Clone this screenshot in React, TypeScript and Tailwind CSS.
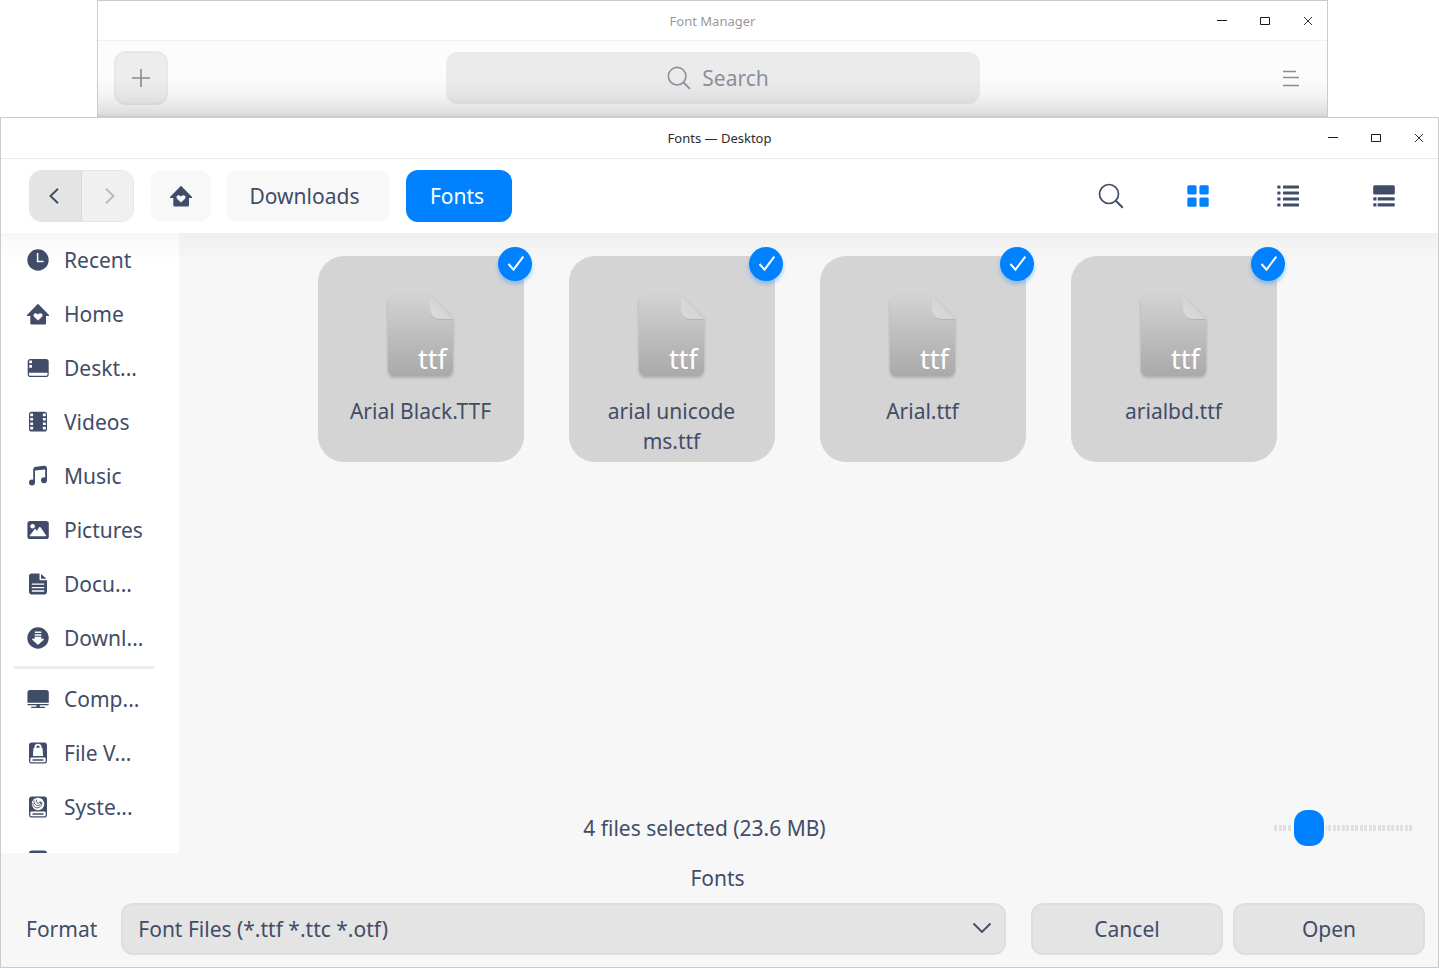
import React from "react";

type IconProps = { className?: string };

const HomeIcon = ({ className = "size-[22px]" }: IconProps) => (
  <svg viewBox="0 0 22 22" className={className} fill="currentColor" aria-hidden="true">
    <path
      fillRule="evenodd"
      d="M11 .8 22 12.100c.2.500 0 .9-.5.9H19v7.200c0 .8-.5 1.300-1.300 1.300H4.600c-.8 0-1.300-.5-1.300-1.300V13H.5c-.5 0-.7-.4-.5-.9L11 .8Zm0 16.600 3.500-3.200c1.300-1.300 1.200-2.700.4-3.400-1-.9-2.500-.8-3.900.7-1.400-1.500-2.900-1.600-3.900-.7-.8.700-.9 2.100.4 3.400l3.500 3.200Z"
    />
  </svg>
);

const RecentIcon = () => (
  <svg viewBox="0 0 22 22" className="size-[22px]" aria-hidden="true">
    <circle cx="11" cy="11" r="10.700" fill="currentColor" />
    <path d="M10.600 4v8.400h6" fill="none" stroke="#fff" strokeWidth="1.500" />
  </svg>
);

const DesktopIcon = () => (
  <svg viewBox="0 0 22 22" className="size-[22px]" aria-hidden="true">
    <rect x=".7" y="2" width="21" height="18" rx="2.800" fill="currentColor" />
    <path d="M1.900 15.800h18.600v1.400c0 1-.6 1.600-1.600 1.600H3.500c-1 0-1.600-.6-1.600-1.600v-1.400Z" fill="#fff" />
    <rect x="2.200" y="3.500" width="2.800" height="2.800" rx=".5" fill="#fff" />
    <rect x="2.200" y="8" width="2.800" height="2.800" rx=".5" fill="#fff" />
  </svg>
);

const VideosIcon = () => (
  <svg viewBox="0 0 22 22" className="size-[22px]" aria-hidden="true">
    <rect x="2" y=".8" width="18" height="19.800" rx="2.600" fill="currentColor" />
    {[2.6, 7, 11.4, 15.8].map((y) => (
      <g key={y} fill="#fff">
        <rect x="3.200" y={y} width="2.900" height="2.600" rx=".5" />
        <rect x="15.900" y={y} width="2.900" height="2.600" rx=".5" />
      </g>
    ))}
  </svg>
);

const MusicIcon = () => (
  <svg viewBox="0 0 22 22" className="size-[22px]" fill="currentColor" aria-hidden="true">
    <path d="M6.200 17.800V4.600c0-1.600 1-2.700 2.700-2.900l8.100-1c1.900-.2 3 .8 3 2.600v12h-1.800V4.400L8 5.600v12.200H6.200Z" />
    <circle cx="5" cy="17.600" r="3" />
    <circle cx="17" cy="15.300" r="3" />
  </svg>
);

const PicturesIcon = () => (
  <svg viewBox="0 0 22 22" className="size-[22px]" aria-hidden="true">
    <rect x=".4" y="2" width="21.400" height="18" rx="2.600" fill="currentColor" />
    <circle cx="5.600" cy="7.200" r="2.300" fill="#fff" />
    <path
      d="M3.200 17.200c-.5 0-.7-.3-.4-.8l4.600-5.900c.5-.6 1.100-.6 1.500 0l1 1.400 2-3.400c.5-.8 1.300-.8 1.800 0l5.300 7.800c.3.500.1.900-.4.900H3.200Z"
      fill="#fff"
    />
  </svg>
);

const DocumentsIcon = () => (
  <svg viewBox="0 0 22 22" className="size-[22px]" aria-hidden="true">
    <path
      d="M4.500.6h8v5.200c0 1 .5 1.500 1.500 1.500h6v11.500c0 1.600-1 2.600-2.600 2.600H4.600C3 21.400 2 20.400 2 18.800V3.200C2 1.600 3 .6 4.500.6Z"
      fill="currentColor"
    />
    <path d="M14 1v4c0 .5.300.8.800.8h4.700L14 1Z" fill="currentColor" />
    <path d="M4.800 11.200h12.400M4.800 14.600h12.400M4.800 18h12.400" stroke="#fff" strokeWidth="1.300" />
  </svg>
);

const DownloadsIcon = () => (
  <svg viewBox="0 0 22 22" className="size-[22px]" aria-hidden="true">
    <circle cx="11" cy="11" r="10.700" fill="currentColor" />
    <path d="M7.700 5.200h6.600M7.700 7.900h6.600" stroke="#fff" strokeWidth="1.500" />
    <path
      d="M7.700 9.700h6.600v2.100h2c.6 0 .8.500.4.900l-4.900 4.600c-.5.500-1.100.500-1.600 0l-4.900-4.600c-.4-.4-.2-.9.400-.9h2V9.700Z"
      fill="#fff"
    />
  </svg>
);

const ComputerIcon = () => (
  <svg viewBox="0 0 22 22" className="size-[22px]" fill="currentColor" aria-hidden="true">
    <path d="M2.800 2h16.600c1.500 0 2.400.9 2.400 2.400v10.400H.4V4.400C.4 2.900 1.300 2 2.800 2Z" />
    <path d="M.4 16h21.400c0 .9-.6 1.300-1.500 1.300H12.800v1.500h4.700c.8 0 .8 1.300 0 1.300h-13c-.8 0-.8-1.300 0-1.300h4.900v-1.500H1.900C1 17.300.4 16.900.4 16Z" />
  </svg>
);

const DriveBase = ({ children }: { children?: React.ReactNode }) => (
  <svg viewBox="0 0 22 22" className="size-[22px]" aria-hidden="true">
    <rect x="2" y=".5" width="18" height="21" rx="2.800" fill="currentColor" />
    <rect x="3.300" y="15.600" width="15.400" height="4.700" rx="1.400" fill="#fff" />
    <path d="M5.500 18h11" stroke="currentColor" strokeWidth="1.500" />
    {children}
  </svg>
);

const VaultIcon = () => (
  <DriveBase>
    <path d="M8.400 7V5.200C8.400 1.700 13.600 1.700 13.600 5.200V7" fill="none" stroke="#fff" strokeWidth="1.900" />
    <path d="M7.600 5.800h6.800c.8 0 1.200.4 1.200 1.200l.5 7H5.900l.5-7c0-.8.4-1.200 1.200-1.200Z" fill="#fff" />
  </DriveBase>
);

const SystemDiskIcon = () => (
  <DriveBase>
    <circle cx="11" cy="8" r="6.200" fill="#fff" />
    <path
      d="M7 4.400c-.3 3 1.100 5.200 3.900 5.100 2.200-.1 3.300-2 2.400-3.900M5.700 7.200c.3 3 2.600 5.200 5.300 4.600 2.800-.7 4.300-3.200 3.800-5.900M9.600 3.600c-.6 1.700-.1 3.200 1.300 3.600 1.200.3 2-.6 2-1.700"
      fill="none"
      stroke="currentColor"
      strokeWidth=".9"
    />
  </DriveBase>
);

const DataDiskIcon = () => <DriveBase />;

const SearchIcon = ({ className }: IconProps) => (
  <svg viewBox="0 0 26 26" className={className} fill="none" stroke="currentColor" strokeWidth="1.700" aria-hidden="true">
    <circle cx="11" cy="11" r="9.500" />
    <path d="m17.800 17.800 7 7" strokeWidth="2" />
  </svg>
);

const GridIcon = () => (
  <svg viewBox="0 0 22 22" className="size-[22px]" fill="currentColor" aria-hidden="true">
    <rect x=".3" y=".3" width="9.300" height="9.300" rx="1.500" />
    <rect x="12.400" y=".3" width="9.300" height="9.300" rx="1.500" />
    <rect x=".3" y="12.400" width="9.300" height="9.300" rx="1.500" />
    <rect x="12.400" y="12.400" width="9.300" height="9.300" rx="1.500" />
  </svg>
);

const ListIcon = () => (
  <svg viewBox="0 0 22 22" className="size-[22px]" fill="currentColor" aria-hidden="true">
    {[0, 6, 12, 18].map((y) => (
      <g key={y}>
        <rect x=".3" y={y + 0.4} width="3.200" height="3.200" rx=".5" />
        <rect x="6" y={y + 0.4} width="16" height="3.200" rx=".5" />
      </g>
    ))}
  </svg>
);

const DetailIcon = () => (
  <svg viewBox="0 0 22 22" className="size-[22px]" fill="currentColor" aria-hidden="true">
    <rect x=".2" y=".2" width="21.600" height="9.200" rx="1.500" />
    {[12, 18].map((y) => (
      <g key={y}>
        <rect x=".3" y={y + 0.3} width="3.200" height="3.200" rx=".5" />
        <rect x="4.700" y={y + 0.3} width="17" height="3.200" rx=".5" />
      </g>
    ))}
  </svg>
);

const WindowControls = () => (
  <div className="flex h-full items-center justify-end gap-[7px] pr-px text-[#1a1a1a]">
    <button type="button" aria-label="Minimize" className="grid h-9 w-9 place-items-center">
      <svg viewBox="0 0 12 12" className="size-3" aria-hidden="true">
        <path d="M1 5.500h10" stroke="currentColor" />
      </svg>
    </button>
    <button type="button" aria-label="Maximize" className="grid h-9 w-9 place-items-center">
      <svg viewBox="0 0 12 12" className="size-3" aria-hidden="true">
        <path d="M1.500 2.500h9v7h-9z" fill="none" stroke="currentColor" />
      </svg>
    </button>
    <button type="button" aria-label="Close" className="grid h-9 w-9 place-items-center">
      <svg viewBox="0 0 12 12" className="size-3" aria-hidden="true">
        <path d="m2 2 8 8m0-8-8 8" stroke="currentColor" strokeWidth=".9" />
      </svg>
    </button>
  </div>
);

const TitleBar = ({ title, muted }: { title: string; muted?: boolean }) => (
  <header
    className={
      muted
        ? "grid h-10 shrink-0 grid-cols-[1fr_auto_1fr] items-center border-b border-[#f0f0f0] bg-white"
        : "grid h-[41px] shrink-0 grid-cols-[1fr_auto_1fr] items-center border-b border-[#e6e8ea] bg-white"
    }
  >
    <span />
    <h1
      className={
        muted ? "text-[13px] leading-[18px] text-[#999]" : "text-[13px] leading-[18px] text-[#2b2b2b]"
      }
    >
      {title}
    </h1>
    <WindowControls />
  </header>
);

const FileIcon = () => (
  <svg viewBox="0 0 80 96" className="h-24 w-20" aria-hidden="true">
    <defs>
      <linearGradient id="sheet" x1="0" y1="0" x2="0" y2="1">
        <stop offset="0" stopColor="#d2d2d2" />
        <stop offset="1" stopColor="#a9a9a9" />
      </linearGradient>
      <linearGradient id="fold" x1="0" y1="1" x2="1" y2="0">
        <stop offset="0" stopColor="#dcdcdc" />
        <stop offset="1" stopColor="#cecece" />
      </linearGradient>
      <filter id="lift" x="-20%" y="-20%" width="140%" height="140%">
        <feDropShadow dx="0" dy="1.500" stdDeviation="1.800" floodColor="#000" floodOpacity=".22" />
      </filter>
      <filter id="crease" x="-20%" y="-20%" width="140%" height="140%">
        <feDropShadow dx="0" dy=".8" stdDeviation=".7" floodColor="#000" floodOpacity=".12" />
      </filter>
    </defs>
    <path
      d="M14 8h36l22 22v51c0 4.500-2.500 7-7 7H14c-4.500 0-7-2.500-7-7V15c0-4.500 2.500-7 7-7Z"
      fill="url(#sheet)"
      filter="url(#lift)"
    />
    <path d="M49 8 72 31H60c-7 0-11-4-11-11V8Z" fill="url(#fold)" filter="url(#crease)" />
    <text x="37" y="81" fontSize="27" fontWeight="400" fill="#fff" fontFamily="Noto Sans, sans-serif">
      ttf
    </text>
  </svg>
);

const CheckBadge = () => (
  <span className="absolute -top-[9px] -right-[8px] grid size-[34px] place-items-center rounded-full bg-[#0081ff] shadow-[0_3px_4px_rgba(0,129,255,0.35)]">
    <svg viewBox="0 0 34 34" className="size-[34px]" aria-hidden="true">
      <path d="m10.500 17 5 5.600 9.800-13" fill="none" stroke="#fff" strokeWidth="2" />
    </svg>
  </span>
);

const FileCard = ({ name }: { name: string }) => (
  <button
    type="button"
    aria-pressed="true"
    className="relative flex size-[206px] flex-col items-center rounded-[26px] bg-[#d4d4d4] px-4 pt-8"
  >
    <FileIcon />
    <span className="mt-3">{name}</span>
    <CheckBadge />
  </button>
);

const places = [
  { label: "Recent", Icon: RecentIcon },
  { label: "Home", Icon: HomeIcon },
  { label: "Deskt...", Icon: DesktopIcon },
  { label: "Videos", Icon: VideosIcon },
  { label: "Music", Icon: MusicIcon },
  { label: "Pictures", Icon: PicturesIcon },
  { label: "Docu...", Icon: DocumentsIcon },
  { label: "Downl...", Icon: DownloadsIcon },
];

const devices = [
  { label: "Comp...", Icon: ComputerIcon },
  { label: "File V...", Icon: VaultIcon },
  { label: "Syste...", Icon: SystemDiskIcon },
  { label: "", Icon: DataDiskIcon },
];

const SideItem = ({ label, Icon }: { label: string; Icon: React.ComponentType }) => (
  <li>
    <a href="#" aria-label={label || "Disk"} className="flex h-[54px] items-center gap-[15px] pl-[26px]">
      <Icon />
      <span className="whitespace-nowrap">{label}</span>
    </a>
  </li>
);

const files = ["Arial Black.TTF", "arial unicode ms.ttf", "Arial.ttf", "arialbd.ttf"];

const FontManager = () => (
  <section className="relative mr-[111px] ml-[97px] h-[117px] shrink-0 border border-b-0 border-[#c6ccd2] bg-[#fcfcfc]">
    <TitleBar title="Font Manager" muted />
    <div className="grid grid-cols-[1fr_534px_1fr] items-center px-4 pt-[10px]">
      <button
        type="button"
        aria-label="Add fonts"
        className="grid size-[54px] place-items-center rounded-xl border-2 border-[#e8e8e8] bg-[#ededed] text-[#868b96]"
      >
        <svg viewBox="0 0 18 18" className="size-[18px]" aria-hidden="true">
          <path d="M9 0v18M0 9h18" stroke="currentColor" strokeWidth="1.600" />
        </svg>
      </button>
      <label className="flex h-[52px] items-center justify-center gap-[11px] rounded-xl bg-[#ebebeb] pl-[11px] text-[#8b909c]">
        <SearchIcon className="size-6" />
        <input
          type="text"
          aria-label="Search"
          placeholder="Search"
          className="field-sizing-content bg-transparent outline-none placeholder:text-[#8b909c]"
        />
      </label>
      <button type="button" aria-label="Menu" className="grid h-10 w-10 place-items-center justify-self-end text-[#8c8c8c]">
        <svg viewBox="0 0 16 18" className="h-[18px] w-4" aria-hidden="true">
          <path d="M0 2.500h13M0 8.500h16M0 16.500h16" stroke="currentColor" strokeWidth="1.300" />
        </svg>
      </button>
    </div>
    <div className="pointer-events-none absolute inset-x-0 bottom-0 h-10 bg-[linear-gradient(to_bottom,rgba(0,0,0,0),rgba(0,0,0,0.03)_45%,rgba(0,0,0,0.12)_93%,rgba(0,0,0,0.2))]" />
  </section>
);

const PathBar = () => (
  <nav className="flex h-[74px] shrink-0 items-center bg-white pr-7 pl-7" aria-label="Location">
    <div className="flex h-[52px] overflow-hidden rounded-xl border border-[#e6e6e6]">
      <button type="button" aria-label="Back" className="grid w-[52px] place-items-center border-r border-[#d9d9d9] bg-[#e4e4e4] pr-[3px]">
        <svg viewBox="0 0 10 16" className="h-4 w-[10px]" aria-hidden="true">
          <path d="M9 .7 1.500 8 9 15.300" fill="none" stroke="currentColor" strokeWidth="1.900" />
        </svg>
      </button>
      <button type="button" aria-label="Forward" disabled className="grid w-[51px] place-items-center bg-[#f0f0f0] pl-1 text-[#b9bac0]">
        <svg viewBox="0 0 10 16" className="h-4 w-[10px]" aria-hidden="true">
          <path d="M1 .7 8.500 8 1 15.300" fill="none" stroke="currentColor" strokeWidth="1.900" />
        </svg>
      </button>
    </div>
    <div className="ml-[17px] flex items-center gap-4">
      <button type="button" aria-label="Home" className="grid h-[52px] w-[60px] place-items-center rounded-xl bg-[#f8f8f8]">
        <HomeIcon />
      </button>
      <button type="button" className="h-[52px] w-[163px] rounded-xl bg-[#f8f8f8] pr-2">
        Downloads
      </button>
      <button type="button" className="h-[52px] w-[106px] rounded-xl bg-[#0081ff] pr-1 text-white">
        Fonts
      </button>
    </div>
    <div className="ml-auto flex items-center">
      <button type="button" aria-label="Search files" className="grid size-[52px] place-items-center">
        <SearchIcon className="size-[26px]" />
      </button>
      <button type="button" aria-label="Icon view" aria-pressed="true" className="ml-[35px] grid size-[52px] place-items-center text-[#0081ff]">
        <GridIcon />
      </button>
      <button type="button" aria-label="List view" className="ml-[38px] grid size-[52px] place-items-center">
        <ListIcon />
      </button>
      <button type="button" aria-label="Detail view" className="ml-11 grid size-[52px] place-items-center">
        <DetailIcon />
      </button>
    </div>
  </nav>
);

const actionButton =
  "h-[52px] w-[192px] rounded-xl border-2 border-[#dedede] bg-[#e4e4e4]";

const Footer = () => (
  <footer className="shrink-0 pr-[13px] pb-3 pl-[25px]">
    <p className="flex h-[50px] items-center justify-center pr-4">Fonts</p>
    <div className="flex items-center">
      <label htmlFor="format">Format</label>
      <div className="relative ml-6 flex-1">
        <select
          id="format"
          className="h-[52px] w-full appearance-none rounded-xl border-2 border-[#dedede] bg-[#e4e4e4] pl-[15px] outline-none"
        >
          <option>Font Files (*.ttf *.ttc *.otf)</option>
        </select>
        <svg viewBox="0 0 20 12" className="pointer-events-none absolute top-[19px] right-[14px] h-3 w-5" aria-hidden="true">
          <path d="m1.500 1.500 8.500 8.500 8.500-8.500" fill="none" stroke="currentColor" strokeWidth="1.900" />
        </svg>
      </div>
      <div className="ml-[25px] flex gap-[10px]">
        <button type="button" className={actionButton}>Cancel</button>
        <button type="button" className={actionButton}>Open</button>
      </div>
    </div>
  </footer>
);

const FileDialog = () => (
  <section className="flex min-h-0 flex-1 flex-col border border-[#c6ccd2] bg-[#f7f7f7]">
    <TitleBar title="Fonts — Desktop" />
    <PathBar />
    <div className="relative flex min-h-0 flex-1">
      <aside className="w-[178px] shrink-0 overflow-hidden bg-white">
        <ul>
          {places.map((item) => (
            <SideItem key={item.label} {...item} />
          ))}
        </ul>
        <hr className="mt-px mr-[25px] mb-[3px] ml-[13px] h-[3px] border-0 bg-[#ececec]" />
        <ul>
          {devices.map((item) => (
            <SideItem key={item.label} {...item} />
          ))}
        </ul>
      </aside>
      <main className="flex min-w-0 flex-1 flex-col">
        <div className="z-10 flex flex-1 flex-wrap content-start justify-center gap-[45px] pt-[23px] pr-[23px]">
          {files.map((name) => (
            <FileCard key={name} name={name} />
          ))}
        </div>
        <div className="flex h-[50px] items-center pr-[26px]">
          <p className="flex-1 text-center">4 files selected (23.6 MB)</p>
          <input
            type="range"
            aria-label="Icon size"
            min={0}
            max={108}
            defaultValue={20}
            className="ml-11 h-9 w-[138px] appearance-none bg-[linear-gradient(to_right,#e0e0e0_3px,transparent_3px,transparent_5px,#e0e0e0_5px,#e0e0e0_8px,transparent_8px)] bg-[length:9px_6px] bg-[position:left_center] bg-repeat-x outline-none [&::-webkit-slider-thumb]:h-9 [&::-webkit-slider-thumb]:w-[30px] [&::-webkit-slider-thumb]:appearance-none [&::-webkit-slider-thumb]:rounded-[13px] [&::-webkit-slider-thumb]:bg-[#0081ff] [&::-webkit-slider-thumb]:shadow-[0_0_0_2px_#f7f7f7]"
          />
        </div>
      </main>
      <div className="pointer-events-none absolute inset-x-0 top-0 h-7 bg-[linear-gradient(to_bottom,rgba(0,0,0,0.03),rgba(0,0,0,0))]" />
    </div>
    <Footer />
  </section>
);

export default function App() {
  return (
    <div className="flex h-screen flex-col overflow-hidden bg-white font-['Noto_Sans',sans-serif] text-[21px] leading-[30px] text-[#414d68]">
      <FontManager />
      <FileDialog />
    </div>
  );
}
